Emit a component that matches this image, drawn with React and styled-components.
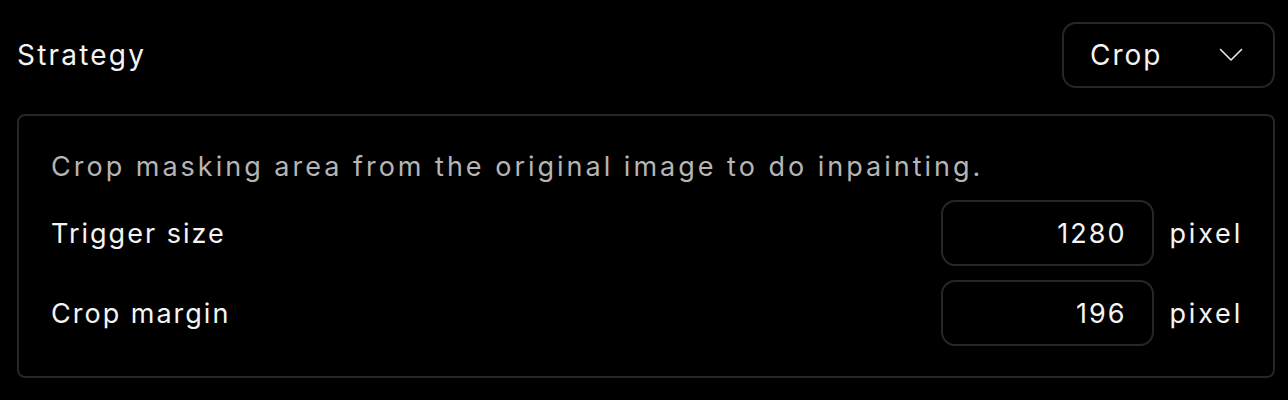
import React from "react";
import styled, { createGlobalStyle } from "styled-components";

const GlobalStyle = createGlobalStyle`
  html, body {
    margin: 0;
    padding: 0;
    background: #000;
  }
  body {
    font-family: "Inter", "Noto Sans", sans-serif;
    color: #f2f2f2;
  }
`;

const Page = styled.div`
  width: 1288px;
  height: 400px;
  box-sizing: border-box;
  padding: 22px 13px 0 17px;
  display: flex;
  flex-direction: column;
  gap: 26px;
`;

const HeaderRow = styled.div`
  display: flex;
  align-items: center;
  justify-content: space-between;
`;

const Title = styled.div`
  font-size: 28px;
  letter-spacing: 2.2px;
  color: #f4f4f4;
`;

const Select = styled.div`
  width: 213px;
  height: 66px;
  box-sizing: border-box;
  border: 2px solid #262626;
  border-radius: 14px;
  display: flex;
  align-items: center;
  justify-content: space-between;
  padding: 0 30px 0 26px;
  font-size: 28px;
  letter-spacing: 2px;
  color: #f4f4f4;
`;

const Panel = styled.div`
  box-sizing: border-box;
  border: 2px solid #262626;
  border-radius: 8px;
  padding: 31px 30px 30px 32px;
  display: flex;
  flex-direction: column;
  gap: 14px;
`;

const Description = styled.div`
  font-size: 27px;
  line-height: 39px;
  letter-spacing: 3px;
  color: #b5b5b5;
`;

const Row = styled.div`
  display: flex;
  align-items: center;
`;

const Label = styled.div`
  flex: 1;
  font-size: 27px;
  letter-spacing: 2px;
  color: #f4f4f4;
`;

const NumberBox = styled.div`
  width: 213px;
  height: 66px;
  box-sizing: border-box;
  border: 2px solid #262626;
  border-radius: 14px;
  display: flex;
  align-items: center;
  justify-content: flex-end;
  padding-right: 25px;
  font-size: 27px;
  letter-spacing: 2px;
  color: #f4f4f4;
`;

const Unit = styled.div`
  margin-left: 16px;
  font-size: 27px;
  letter-spacing: 2.8px;
  color: #f4f4f4;
`;

const Chevron = () => (
  <svg width="24" height="14" viewBox="0 0 24 14" fill="none">
    <polyline
      points="1.5,1.5 12,12 22.5,1.5"
      stroke="#e8e8e8"
      strokeWidth="1.6"
      strokeLinecap="round"
      strokeLinejoin="round"
    />
  </svg>
);

const Field = ({ label, value, unit }) => (
  <Row>
    <Label>{label}</Label>
    <NumberBox>{value}</NumberBox>
    <Unit>{unit}</Unit>
  </Row>
);

export default function App() {
  return (
    <>
      <GlobalStyle />
      <Page>
        <HeaderRow>
          <Title>Strategy</Title>
          <Select>
            <span>Crop</span>
            <Chevron />
          </Select>
        </HeaderRow>
        <Panel>
          <Description>
            Crop masking area from the original image to do inpainting.
          </Description>
          <Field label="Trigger size" value="1280" unit="pixel" />
          <Field label="Crop margin" value="196" unit="pixel" />
        </Panel>
      </Page>
    </>
  );
}
